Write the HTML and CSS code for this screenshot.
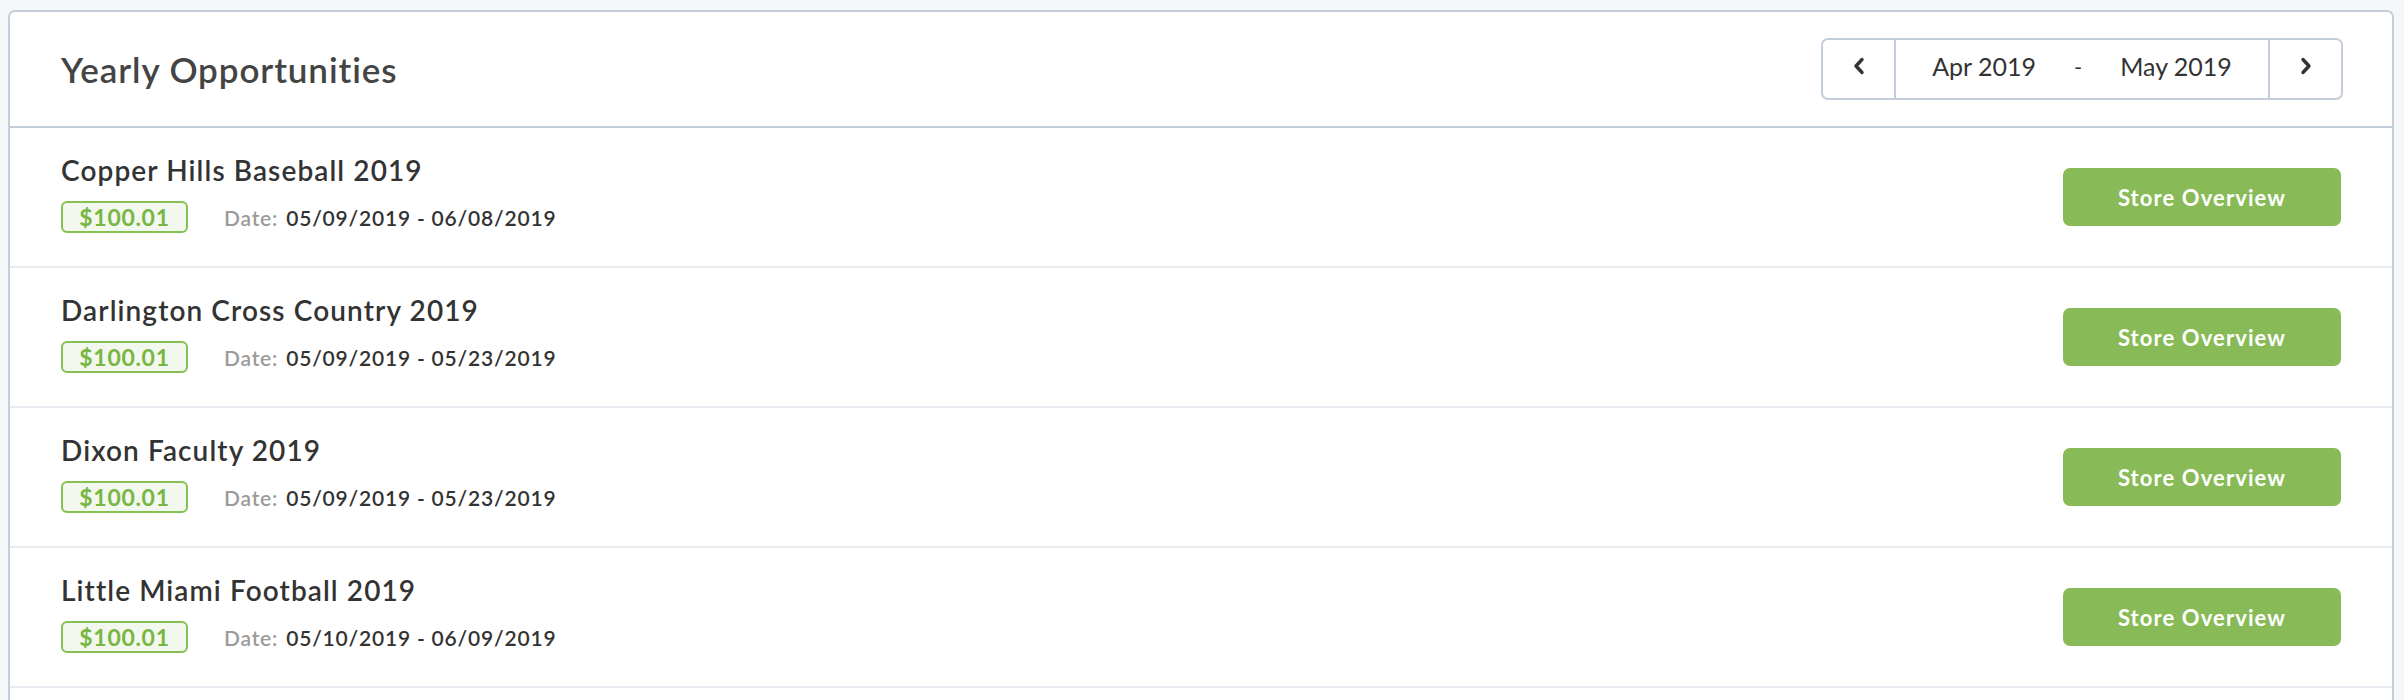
FILE: index.html
```html
<!DOCTYPE html>
<html>
<head>
<meta charset="utf-8">
<link rel="stylesheet" href="styles.css">
</head>
<body>
<div class="page">
  <div class="card">
    <div class="card-header">
      <h1 class="card-title">Yearly Opportunities</h1>
      <div class="range">
        <button class="range-btn" aria-label="Previous">
          <svg width="14" height="18" viewBox="0 0 14 18"><polyline points="10,2.5 4,9 10,15.5" fill="none" stroke="#333" stroke-width="3.4" stroke-linecap="round" stroke-linejoin="round"/></svg>
        </button>
        <div class="range-mid">
          <span>Apr 2019</span>
          <span class="dash">-</span>
          <span>May 2019</span>
        </div>
        <button class="range-btn" aria-label="Next">
          <svg width="14" height="18" viewBox="0 0 14 18"><polyline points="4,2.5 10,9 4,15.5" fill="none" stroke="#333" stroke-width="3.4" stroke-linecap="round" stroke-linejoin="round"/></svg>
        </button>
      </div>
    </div>
    <div class="list">
      <div class="row">
        <div class="info">
          <div class="name">Copper Hills Baseball 2019</div>
          <div class="meta">
            <span class="badge">$100.01</span>
            <span class="date-label">Date:</span>
            <span class="date-value">05/09/2019 - 06/08/2019</span>
          </div>
        </div>
        <button class="btn">Store Overview</button>
      </div>
      <div class="row">
        <div class="info">
          <div class="name">Darlington Cross Country 2019</div>
          <div class="meta">
            <span class="badge">$100.01</span>
            <span class="date-label">Date:</span>
            <span class="date-value">05/09/2019 - 05/23/2019</span>
          </div>
        </div>
        <button class="btn">Store Overview</button>
      </div>
      <div class="row">
        <div class="info">
          <div class="name">Dixon Faculty 2019</div>
          <div class="meta">
            <span class="badge">$100.01</span>
            <span class="date-label">Date:</span>
            <span class="date-value">05/09/2019 - 05/23/2019</span>
          </div>
        </div>
        <button class="btn">Store Overview</button>
      </div>
      <div class="row">
        <div class="info">
          <div class="name">Little Miami Football 2019</div>
          <div class="meta">
            <span class="badge">$100.01</span>
            <span class="date-label">Date:</span>
            <span class="date-value">05/10/2019 - 06/09/2019</span>
          </div>
        </div>
        <button class="btn">Store Overview</button>
      </div>
    </div>
  </div>
</div>
</body>
</html>
```
FILE: styles.css
```css
html, body {
  margin: 0;
  padding: 0;
  background: #f6f7f9;
}
body {
  font-family: Lato, "Open Sans", Arial, sans-serif;
  color: #333;
}
.page {
  padding: 10px 10px 0 8px;
}
.card {
  background: #fff;
  border: 2px solid #c4ceda;
  border-radius: 7px 7px 0 0;
  padding-bottom: 40px;
}
.card-header {
  height: 114px;
  padding: 0 49px 0 51px;
  display: flex;
  align-items: center;
  justify-content: space-between;
  border-bottom: 2px solid #c4ceda;
}
.card-title {
  margin: 0;
  font-size: 35px;
  font-weight: 600;
  letter-spacing: 0.9px;
  color: #444;
  line-height: 1;
}
.range {
  display: flex;
  height: 62px;
  box-sizing: border-box;
  border: 2px solid #c4ceda;
  border-radius: 7px;
}
.range-btn {
  width: 73px;
  border: 0;
  background: transparent;
  padding: 0;
  display: flex;
  align-items: center;
  justify-content: center;
  padding-bottom: 6px;
}
.range-btn:first-child {
  border-right: 2px solid #c4ceda;
}
.range-btn:last-child {
  border-left: 2px solid #c4ceda;
}
.range-mid {
  width: 372px;
  display: flex;
  align-items: center;
  justify-content: center;
  gap: 38px;
  font-size: 25px;
  font-weight: 400;
  color: #333;
  padding-bottom: 6px;
}
.range-mid .dash {
  font-size: 22px;
}
.row {
  height: 138px;
  border-bottom: 2px solid #e9ebf0;
  padding: 0 51px;
  display: flex;
  align-items: center;
  justify-content: space-between;
}
.info {
  height: 80px;
  margin-bottom: 8px;
  display: flex;
  flex-direction: column;
  justify-content: space-between;
}
.name {
  font-size: 28px;
  font-weight: 600;
  letter-spacing: 1.1px;
  line-height: 34px;
  color: #333;
}
.meta {
  display: flex;
  align-items: center;
  height: 32px;
  font-size: 21px;
  font-weight: 600;
  letter-spacing: 0.8px;
}
.badge {
  box-sizing: border-box;
  width: 127px;
  height: 32px;
  border: 2px solid #85c052;
  border-radius: 6px;
  background: #f2f8ed;
  color: #78b644;
  font-size: 23px;
  font-weight: 700;
  letter-spacing: 0.7px;
  display: flex;
  align-items: center;
  justify-content: center;
  margin-right: 36px;
}
.date-label {
  color: #9b9b9b;
  margin-right: 8px;
}
.date-value {
  color: #333;
}
.btn {
  width: 278px;
  height: 58px;
  border: 0;
  border-radius: 7px;
  background: #88bb57;
  color: #fff;
  font-family: Lato, "Open Sans", Arial, sans-serif;
  font-size: 22px;
  font-weight: 700;
  letter-spacing: 1.1px;
  padding: 0;
}
```
